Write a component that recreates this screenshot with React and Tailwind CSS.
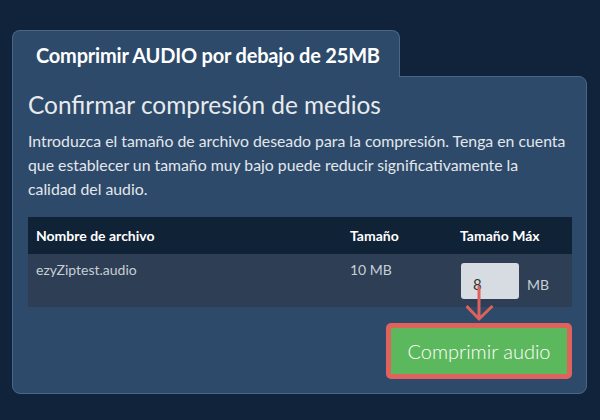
import { useState } from 'react';

const FONT = { fontFamily: 'Lato, "Open Sans", "Liberation Sans", sans-serif' };

export default function App() {
  const [maxSize, setMaxSize] = useState('8');

  return (
    <div className="w-[600px] h-[420px] bg-[#10233a] pt-[30px] pl-[12px]" style={FONT}>
      <div className="w-[575px] flex flex-col">
        <div className="relative z-10 -mb-px w-[388px] h-[47px] bg-[#2d4a6a] border border-b-0 border-[#4a6686] rounded-t-lg flex items-center pl-[23px] pt-[2px]">
          <h2 className="text-[20px] font-bold text-white tracking-[-0.2px]">Comprimir AUDIO por debajo de 25MB</h2>
        </div>

        <div className="relative bg-[#2d4a6a] border border-[#4a6686] rounded-b-lg rounded-tr-lg px-[15px] pt-[14px] pb-[14px]">
          <h1 className="text-[24.4px] leading-[28px] text-[#e8ebee]">Confirmar compresión de medios</h1>
          <p className="mt-[10px] w-[540px] text-[15.8px] leading-[24px] text-[#e3e7ec]">
            Introduzca el tamaño de archivo deseado para la compresión. Tenga en cuenta que establecer un tamaño muy bajo puede reducir significativamente la calidad del audio.
          </p>

          <table className="mt-[16px] w-[544px] border-collapse text-[14px]">
            <thead>
              <tr className="bg-[#0f2236] text-white h-[37px]">
                <th className="w-[314px] text-left font-bold pl-[8px]">Nombre de archivo</th>
                <th className="w-[110px] text-left font-bold pl-[8px]">Tamaño</th>
                <th className="text-left font-bold pl-[8px]">Tamaño Máx</th>
              </tr>
            </thead>
            <tbody>
              <tr className="bg-[#2e3f55] text-[#c8ced6] align-top">
                <td className="pl-[8px] pt-[6px] leading-[20px]">ezyZiptest.audio</td>
                <td className="pl-[8px] pt-[6px] leading-[20px]">10 MB</td>
                <td className="pl-[9px] pt-[9px] pb-[8px]">
                  <div className="relative flex items-center gap-[8px]">
                    <input
                      value={maxSize}
                      onChange={(e) => setMaxSize(e.target.value)}
                      className="w-[58px] h-[36px] bg-[#d7dbe2] rounded-[3px] pl-[12px] pt-[6px] text-[15px] text-[#333] outline-none"
                      style={FONT}
                    />
                    <span className="text-[14px] pt-[6px]">MB</span>
                    <svg className="absolute left-[5px] top-[23px] pointer-events-none" width="30" height="36" viewBox="0 0 30 36">
                      <path d="M13 0 V33 M0.5 20 L13 33 L26.5 20" fill="none" stroke="#e0605b" strokeWidth="3" />
                    </svg>
                  </div>
                </td>
              </tr>
            </tbody>
          </table>

          <div className="mt-[16px] flex justify-end w-[544px]">
            <button className="w-[186px] h-[56px] bg-[#5cb85c] border-[5px] border-[#df625c] rounded-[5px] text-white text-[20px] font-light" style={FONT}>
              Comprimir audio
            </button>
          </div>
        </div>
      </div>
    </div>
  );
}
